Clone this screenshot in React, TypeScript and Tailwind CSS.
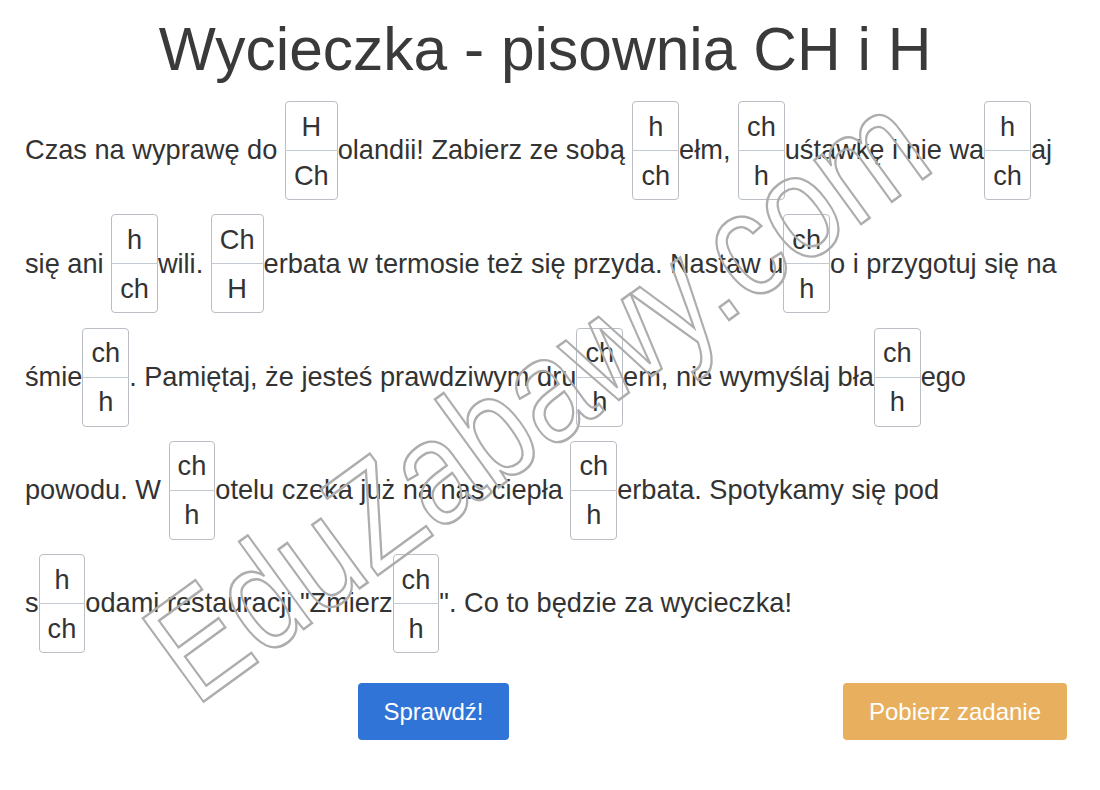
import React from "react";

type Part = string | { a: string; b: string };

// each line of the exercise as it wraps in the reference
const lines: Part[][] = [
  ["Czas na wyprawę do ", { a: "H", b: "Ch" }, "olandii! Zabierz ze sobą ", { a: "h", b: "ch" }, "ełm, ", { a: "ch", b: "h" }, "uśtawkę i nie wa", { a: "h", b: "ch" }, "aj"],
  ["się ani ", { a: "h", b: "ch" }, "wili. ", { a: "Ch", b: "H" }, "erbata w termosie też się przyda. Nastaw u", { a: "ch", b: "h" }, "o i przygotuj się na"],
  ["śmie", { a: "ch", b: "h" }, ". Pamiętaj, że jesteś prawdziwym dru", { a: "ch", b: "h" }, "em, nie wymyślaj bła", { a: "ch", b: "h" }, "ego"],
  ["powodu. W ", { a: "ch", b: "h" }, "otelu czeka już na nas ciepła ", { a: "ch", b: "h" }, "erbata. Spotykamy się pod"],
  ["s", { a: "h", b: "ch" }, "odami restauracji \"Zmierz", { a: "ch", b: "h" }, "\". Co to będzie za wycieczka!"],
];

function Choice({ a, b }: { a: string; b: string }) {
  return (
    <span className="inline-flex flex-col border border-[#b9bec4] rounded-[4px] bg-white shrink-0">
      <button className="h-[48px] px-[8px] flex items-center justify-center text-[#333] leading-none">{a}</button>
      <span className="h-px bg-[#c3cad2] -mx-px" />
      <button className="h-[48px] px-[8px] flex items-center justify-center text-[#333] leading-none">{b}</button>
    </span>
  );
}

export default function App() {
  return (
    <div className="relative w-[1100px] h-[790px] bg-white overflow-hidden text-[#333]" style={{ fontFamily: '"Liberation Sans", Arial, sans-serif' }}>
      <h1 className="mt-[19px] pr-[10px] h-[60px] leading-none text-center text-[60.5px] text-[#3a3a3a]">Wycieczka - pisownia CH i H</h1>

      <div className="mt-[15px] pl-[25px] text-[27.2px]">
        {lines.map((line, i) => (
          <div key={i} className="h-[113.3px] flex items-center whitespace-pre">
            {line.map((p, j) =>
              typeof p === "string" ? <span key={j}>{p}</span> : <Choice key={j} a={p.a} b={p.b} />
            )}
          </div>
        ))}
      </div>

      <div className="mt-[23px] flex">
        <button className="ml-[358px] w-[151px] h-[57px] rounded-[4px] bg-[#2f74d6] text-white text-[24px]">Sprawdź!</button>
        <button className="ml-auto mr-[33px] w-[224px] h-[57px] rounded-[4px] bg-[#e8b05e] text-white text-[24px]">Pobierz zadanie</button>
      </div>

      {/* watermark */}
      <div className="pointer-events-none absolute left-[536px] top-[396px] -translate-x-1/2 -translate-y-1/2 -rotate-[36deg] scale-x-[0.83] whitespace-nowrap text-[150px] leading-none text-transparent [-webkit-text-stroke:2.5px_#adadad]">
        EduZabawy.com
      </div>
    </div>
  );
}
